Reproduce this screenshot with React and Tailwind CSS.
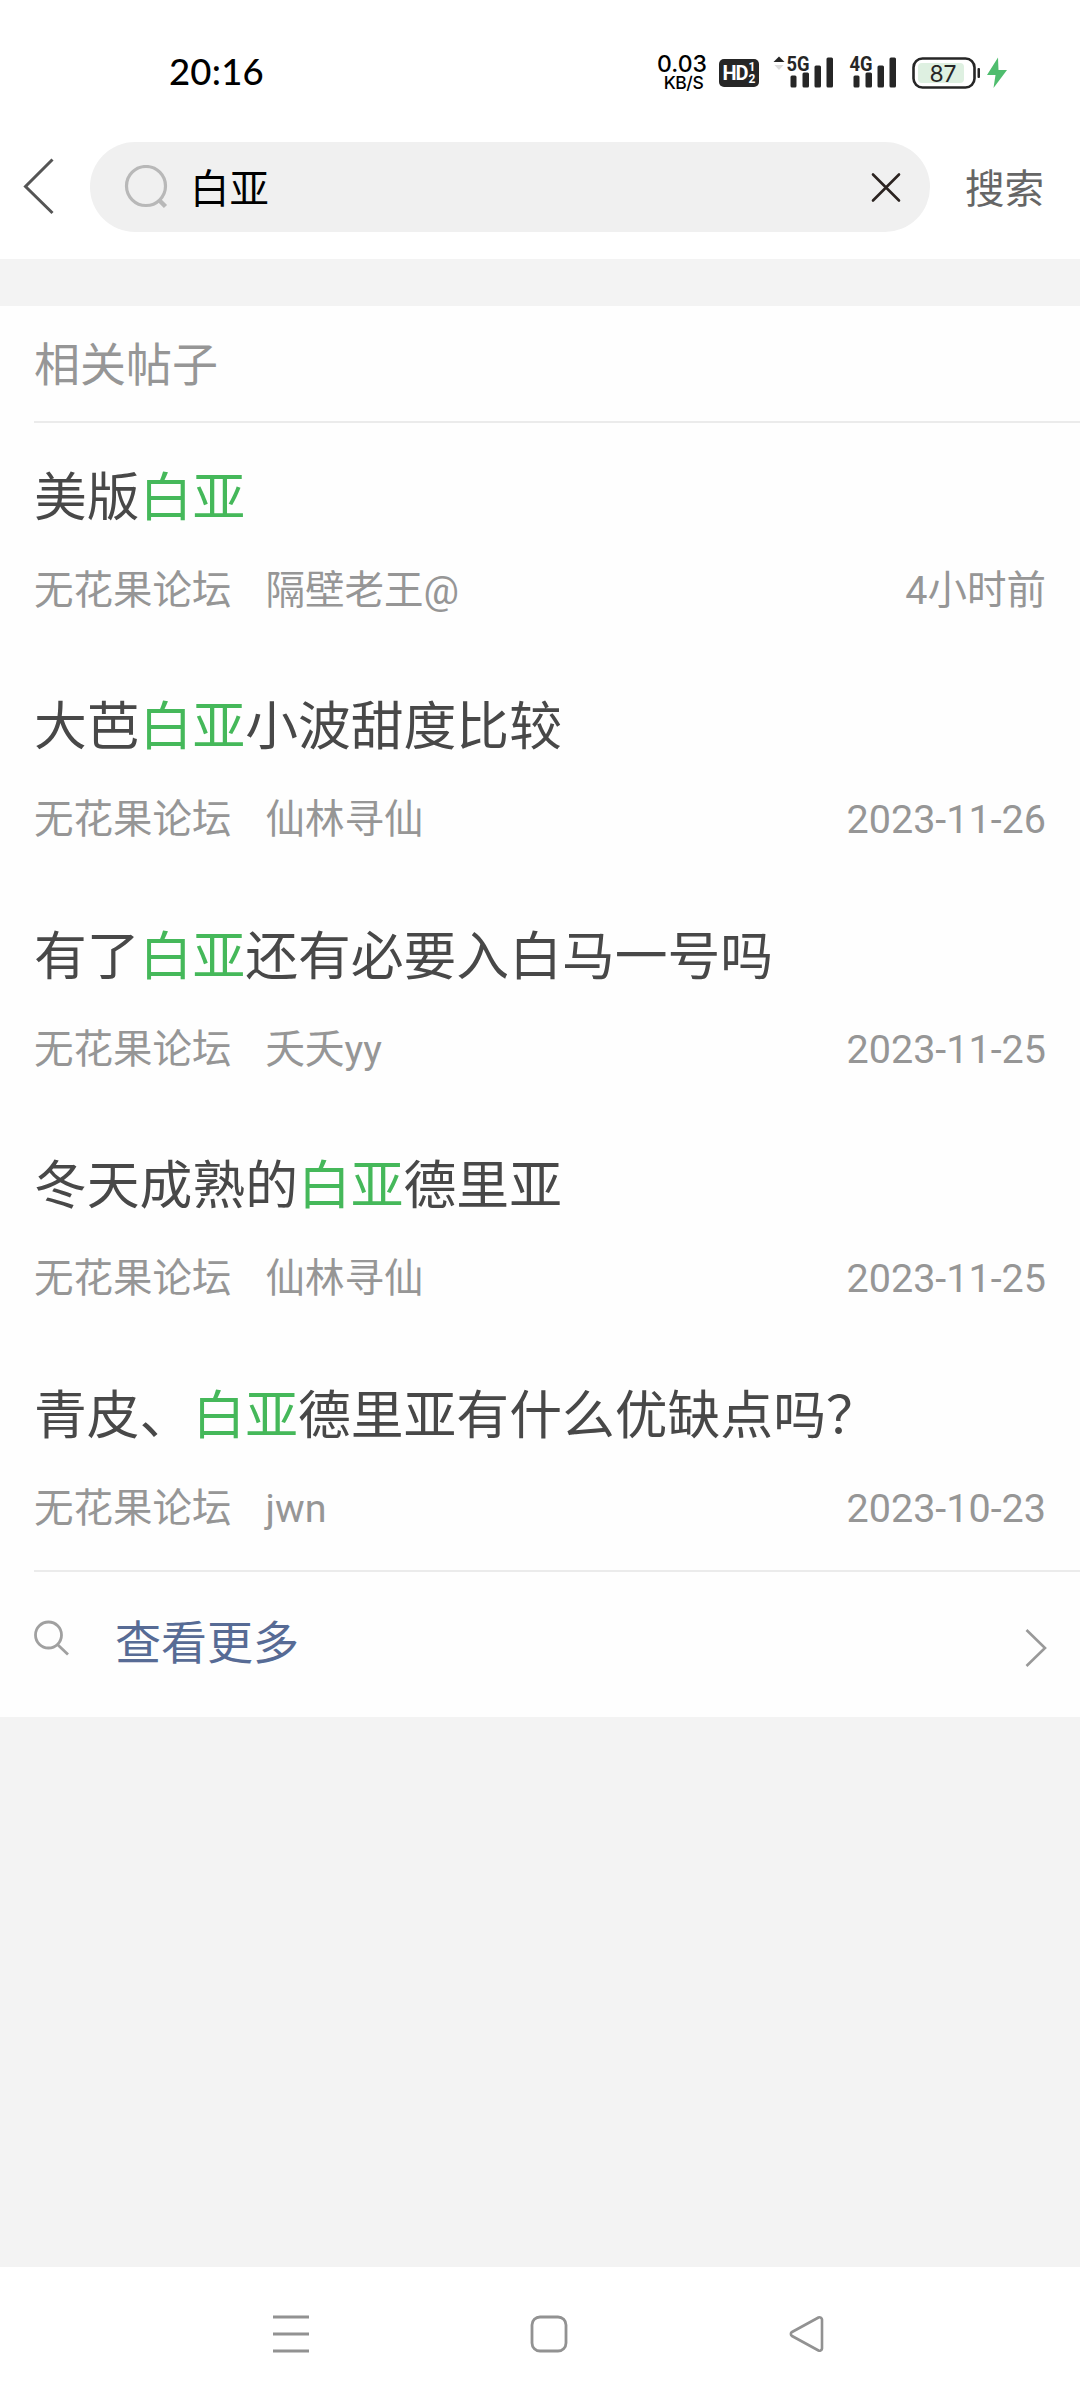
// App.jsx
import React from 'react';

const posts = [
  { before: '美版', after: '', author: '隔壁老王@', time: '4小时前' },
  { before: '大芭', after: '小波甜度比较', author: '仙林寻仙', time: '2023-11-26' },
  { before: '有了', after: '还有必要入白马一号吗', author: '夭夭yy', time: '2023-11-25' },
  { before: '冬天成熟的', after: '德里亚', author: '仙林寻仙', time: '2023-11-25' },
  { before: '青皮、', after: '德里亚有什么优缺点吗？', author: 'jwn', time: '2023-10-23' },
];

const keyword = '白亚';

const Signal = ({ label, arrows }) => (
  <svg className="-mt-[10px]" width="62" height="40" viewBox="0 -6 62 40" fill="#262626">
    {arrows && <path d="M6 2.5l5.5 5.5H.5z" />}
    {arrows && <path d="M6 16l-4.500-5h9z" fill="#dcdcdc" />}
    <text
      x="13.5"
      y="16.5"
      fontSize="20"
      fontWeight="700"
      textLength="23"
      lengthAdjust="spacingAndGlyphs"
      className="font-['Roboto',sans-serif]"
    >
      {label}
    </text>
    <rect x="17.5" y="21.5" width="6" height="12" rx="1.5" />
    <rect x="29.5" y="18.5" width="6.5" height="15" rx="1.5" />
    <rect x="41.5" y="11.5" width="6.5" height="22" rx="1.5" />
    <rect x="53.5" y="3.5" width="6.5" height="30" rx="1.5" />
  </svg>
);

const StatusBar = () => (
  <div className="flex h-[142px] items-center pl-[169px] pt-[3px]">
    <span className="-mt-[2px] w-[486px] font-['Lato',sans-serif] text-[36.5px] font-medium leading-none tracking-[0.2px] text-black">
      20:16
    </span>
    <div className="flex w-[54px] flex-col items-center font-['Inter',sans-serif] font-medium text-black">
      <span className="text-[23px] leading-[20px]">0.03</span>
      <span className="pl-[3px] text-[17.5px] leading-[17px] tracking-tight">KB/S</span>
    </div>
    <div className="ml-[10px] flex h-7 w-10 items-center justify-center rounded-[5px] bg-[#262626] font-['Roboto',sans-serif] font-bold text-white">
      <span className="text-[20px] leading-none tracking-tighter">HD</span>
      <span className="ml-[1px] flex flex-col text-[12px] leading-[12px]">
        <span>1</span>
        <span>2</span>
      </span>
    </div>
    <div className="ml-[14px] flex">
      <Signal label="5G" arrows />
    </div>
    <div className="ml-[1px] flex">
      <Signal label="4G" />
    </div>
    <svg className="ml-[14px]" width="96" height="34" viewBox="0 0 96 34">
      <rect x="1.5" y="2.5" width="61" height="29" rx="9" fill="none" stroke="#262626" strokeWidth="2.6" />
      <rect x="6" y="7" width="46" height="20" rx="4" fill="#def0e1" />
      <rect x="65.5" y="12" width="2.5" height="10" rx="1" fill="#262626" />
      <text x="31" y="25.5" textAnchor="middle" fontSize="23" fill="#262626" className="font-['Inter',sans-serif]">
        87
      </text>
      <path d="M86 1.5L75 19h8.5l-2 13L95 14h-8.5z" fill="#4fbd6e" />
    </svg>
  </div>
);

const SearchBar = () => (
  <div className="flex h-[117px] items-start">
    <svg className="ml-[22px] h-[90px] w-[34px]" viewBox="0 0 34 90" fill="none" stroke="#555" strokeWidth="3">
      <path d="M30.5 17.5L3.5 44.5L30.5 71" />
    </svg>
    <div className="ml-[34px] flex h-[90px] w-[840px] items-center rounded-full bg-[#f0f0f0] pl-[34px] pr-[28px]">
      <svg width="44" height="44" viewBox="0 0 44 44" fill="none" stroke="#b8b8b8" strokeWidth="3.2">
        <circle cx="22" cy="21" r="19.5" />
        <path d="M35 35l6.5 6.5" strokeWidth="4.5" />
      </svg>
      <span className="ml-[22px] flex-1 pt-[6px] text-[39.4px] leading-none text-black">{keyword}</span>
      <svg width="32" height="32" viewBox="0 0 32 32" fill="none" stroke="#2b2320" strokeWidth="2.6" strokeLinecap="round">
        <path d="M3 3.5l26 26M29 3.5L3 29.5" />
      </svg>
    </div>
    <span className="ml-[35px] flex h-[90px] items-center pt-[6px] text-[39.6px] text-[#666]">搜索</span>
  </div>
);

const Post = ({ post }) => (
  <div className="flex h-[229.4px] flex-col px-[34px] pt-[40px]">
    <div className="h-[70px] text-[52.8px] leading-[70px] text-[#484848]">
      {post.before}
      <span className="text-[#45b85a]">{keyword}</span>
      {post.after}
    </div>
    <div className="mt-[28px] flex h-[60px] text-[39.5px] leading-[60px] text-[#969696]">
      <span>无花果论坛</span>
      <span className="ml-[34px] flex-1">{post.author}</span>
      <span>{post.time}</span>
    </div>
  </div>
);

const BottomNav = () => (
  <div className="flex h-[133px] items-center justify-center gap-[218px] pl-[18px] text-[#929292]">
    <svg width="40" height="40" viewBox="0 0 40 40" fill="none" stroke="currentColor" strokeWidth="3.2">
      <path d="M2 3h36M2 20h36M2 37h36" />
    </svg>
    <svg width="40" height="40" viewBox="0 0 40 40" fill="none" stroke="currentColor" strokeWidth="2.8">
      <rect x="3" y="3" width="34" height="34" rx="8" />
    </svg>
    <svg width="40" height="40" viewBox="0 0 40 40" fill="none" stroke="currentColor" strokeWidth="2.6" strokeLinejoin="round">
      <path d="M31.5 3.5L5 18a2.3 2.3 0 0 0 0 4l26.5 14.5a2.5 2.5 0 0 0 3.5-2V5.5a2.5 2.5 0 0 0-3.5-2z" />
    </svg>
  </div>
);

const App = () => {
  return (
    <div className="flex h-[2400px] w-[1080px] flex-col overflow-hidden bg-white font-['Roboto','Noto_Sans_CJK_SC',sans-serif]">
      <StatusBar />
      <SearchBar />

      <div className="flex flex-1 flex-col bg-[#f3f3f3] pt-[47px]">
        {/* Related posts */}
        <div className="h-[1411px] bg-[#fefefe]">
          <div className="ml-[34px] flex h-[117px] items-center border-b-2 border-[#ebebeb] pt-[4px] text-[46px] text-[#969696]">
            相关帖子
          </div>
          {posts.map((post, idx) => (
            <Post key={idx} post={post} />
          ))}
          <div className="ml-[34px] flex h-[147px] items-center border-t-2 border-[#ebebeb] pr-[32px]">
            <svg className="-mt-[12px]" width="36" height="36" viewBox="0 0 36 36" fill="none" stroke="#a0a0a0" strokeWidth="2.8">
              <circle cx="14.5" cy="15" r="13" />
              <path d="M24 25l10 9.5" />
            </svg>
            <span className="-mt-[1px] ml-[45px] flex-1 text-[46px] text-[#576b95]">查看更多</span>
            <svg className="mt-[8px]" width="24" height="40" viewBox="0 0 24 40" fill="none" stroke="#999" strokeWidth="2.6">
              <path d="M2.5 2L21 20L2.5 38" />
            </svg>
          </div>
        </div>
      </div>

      <BottomNav />
    </div>
  );
};

export default App;
